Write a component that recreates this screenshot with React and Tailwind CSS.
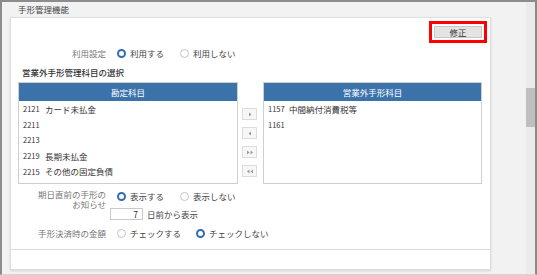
import React from 'react';

const font = { fontFamily: '"Noto Sans CJK JP", "Noto Sans", sans-serif' };

const Radio = ({ checked }) =>
  checked ? (
    <span className="inline-block w-[9px] h-[9px] rounded-full border-[2.5px] border-[#2f6cb3] bg-white shrink-0" />
  ) : (
    <span className="inline-block w-[9px] h-[9px] rounded-full border border-[#c4c4c4] bg-white shrink-0" />
  );

const Option = ({ checked, label, className = '' }) => (
  <div className={`flex items-center gap-[4px] ${className}`}>
    <Radio checked={checked} />
    <span className="text-[#444]">{label}</span>
  </div>
);

const Arrow = ({ dir, double }) => (
  <svg width="8" height="5" viewBox="0 0 8 5" className="text-[#9a9a9a]">
    {dir === 'right' ? (
      double ? (
        <>
          <path d="M1 0.5 L3.5 2.5 L1 4.5 Z" fill="currentColor" />
          <path d="M4.5 0.5 L7 2.5 L4.5 4.5 Z" fill="currentColor" />
        </>
      ) : (
        <path d="M3 0.5 L5.5 2.5 L3 4.5 Z" fill="currentColor" />
      )
    ) : double ? (
      <>
        <path d="M3.5 0.5 L1 2.5 L3.5 4.5 Z" fill="currentColor" />
        <path d="M7 0.5 L4.5 2.5 L7 4.5 Z" fill="currentColor" />
      </>
    ) : (
      <path d="M5 0.5 L2.5 2.5 L5 4.5 Z" fill="currentColor" />
    )}
  </svg>
);

const ListBox = ({ title, items, width, codeWidth }) => (
  <div className={`${width} h-full border border-[#cfcfcf] bg-white flex flex-col`}>
    <div className="h-[18px] bg-[#3b72aa] text-white flex items-center justify-center">{title}</div>
    <ul className="pl-[4px]">
      {items.map((it) => (
        <li key={it.code} className="h-[15.7px] flex items-center text-[#333]">
          <span className={`${codeWidth} text-[7.5px]`}>{it.code}</span>
          <span>{it.name}</span>
        </li>
      ))}
    </ul>
  </div>
);

export default function App() {
  const left = [
    { code: '2121', name: 'カード未払金' },
    { code: '2211', name: '' },
    { code: '2213', name: '' },
    { code: '2219', name: '長期未払金' },
    { code: '2215', name: 'その他の固定負債' },
  ];
  const right = [
    { code: '1157', name: '中間納付消費税等' },
    { code: '1161', name: '' },
  ];

  return (
    <div
      className="w-[537px] h-[275px] bg-[#f2f2f2] border-t-2 border-x-2 border-b border-[#8c8c8c] border-b-[#d4d4d4] flex overflow-hidden text-[8.5px] leading-none"
      style={font}
    >
      <div className="w-[524px] flex flex-col">
        {/* Title */}
        <div className="h-[15px] pl-[16px] flex items-center text-[#444]">手形管理機能</div>

        {/* Panel */}
        <div className="ml-[8px] w-[481px] h-[253px] bg-white border border-[#dedede] shadow-[0_1px_2px_rgba(0,0,0,0.12)] flex flex-col">
          <div className="mt-[3px] h-[22px] flex justify-end pr-[3px]">
            <div className="w-[58px] h-[22px] border-[3px] border-[#ff0000] flex items-center justify-center">
              <button className="w-[48px] h-[12px] bg-[#e4e4e4] border border-[#c9c9c9] text-[#333] flex items-center justify-center">
                修正
              </button>
            </div>
          </div>

          {/* 利用設定 */}
          <div className="h-[20px] flex items-center">
            <div className="w-[95px] text-right text-[#777]">利用設定</div>
            <Option checked label="利用する" className="ml-[11px]" />
            <Option label="利用しない" className="ml-[16px]" />
          </div>

          <div className="h-[19px] flex items-center pl-[11px] text-[#333] font-medium">営業外手形管理科目の選択</div>

          {/* Lists */}
          <div className="h-[102px] flex pl-[7px]">
            <ListBox title="勘定科目" items={left} width="w-[220px]" codeWidth="w-[22px]" />
            <div className="ml-[4px] w-[15px] pt-[26px] flex flex-col gap-[7px]">
              {[
                ['right', false],
                ['left', false],
                ['right', true],
                ['left', true],
              ].map(([d, dbl], i) => (
                <div key={i} className="h-[12px] bg-[#f7f7f7] border border-[#dcdcdc] flex items-center justify-center">
                  <Arrow dir={d} double={dbl} />
                </div>
              ))}
            </div>
            <div className="ml-[6px]">
              <ListBox title="営業外手形科目" items={right} width="w-[219px]" codeWidth="w-[21px]" />
            </div>
          </div>

          {/* 期日直前 */}
          <div className="mt-[6px] flex">
            <div className="w-[95px] text-right text-[#777] leading-[9.5px]">
              期日直前の手形の
              <br />
              お知らせ
            </div>
            <div className="ml-[4px] flex flex-col">
              <div className="h-[12px] flex items-center ml-[7px]">
                <Option checked label="表示する" />
                <Option label="表示しない" className="ml-[16px]" />
              </div>
              <div className="mt-[6px] h-[12px] flex items-center">
                <div className="w-[33px] h-[12px] border border-[#c8c8c8] bg-white flex items-center justify-end pr-[4px] text-[#333]">
                  7
                </div>
                <span className="ml-[4px] text-[#444]">日前から表示</span>
              </div>
            </div>
          </div>

          {/* 手形決済時の金額 */}
          <div className="mt-[7px] h-[12px] flex items-center">
            <div className="w-[95px] text-right text-[#777]">手形決済時の金額</div>
            <Option label="チェックする" className="ml-[11px]" />
            <Option checked label="チェックしない" className="ml-[15px]" />
          </div>

          <div className="mt-[10px] border-t border-[#dcdcdc]" />
        </div>
      </div>

      {/* Scrollbar */}
      <div className="w-[9px] bg-[#ebebeb] flex flex-col">
        <div className="mt-[86px] h-[39px] bg-[#bfbfbf]" />
      </div>
    </div>
  );
}
